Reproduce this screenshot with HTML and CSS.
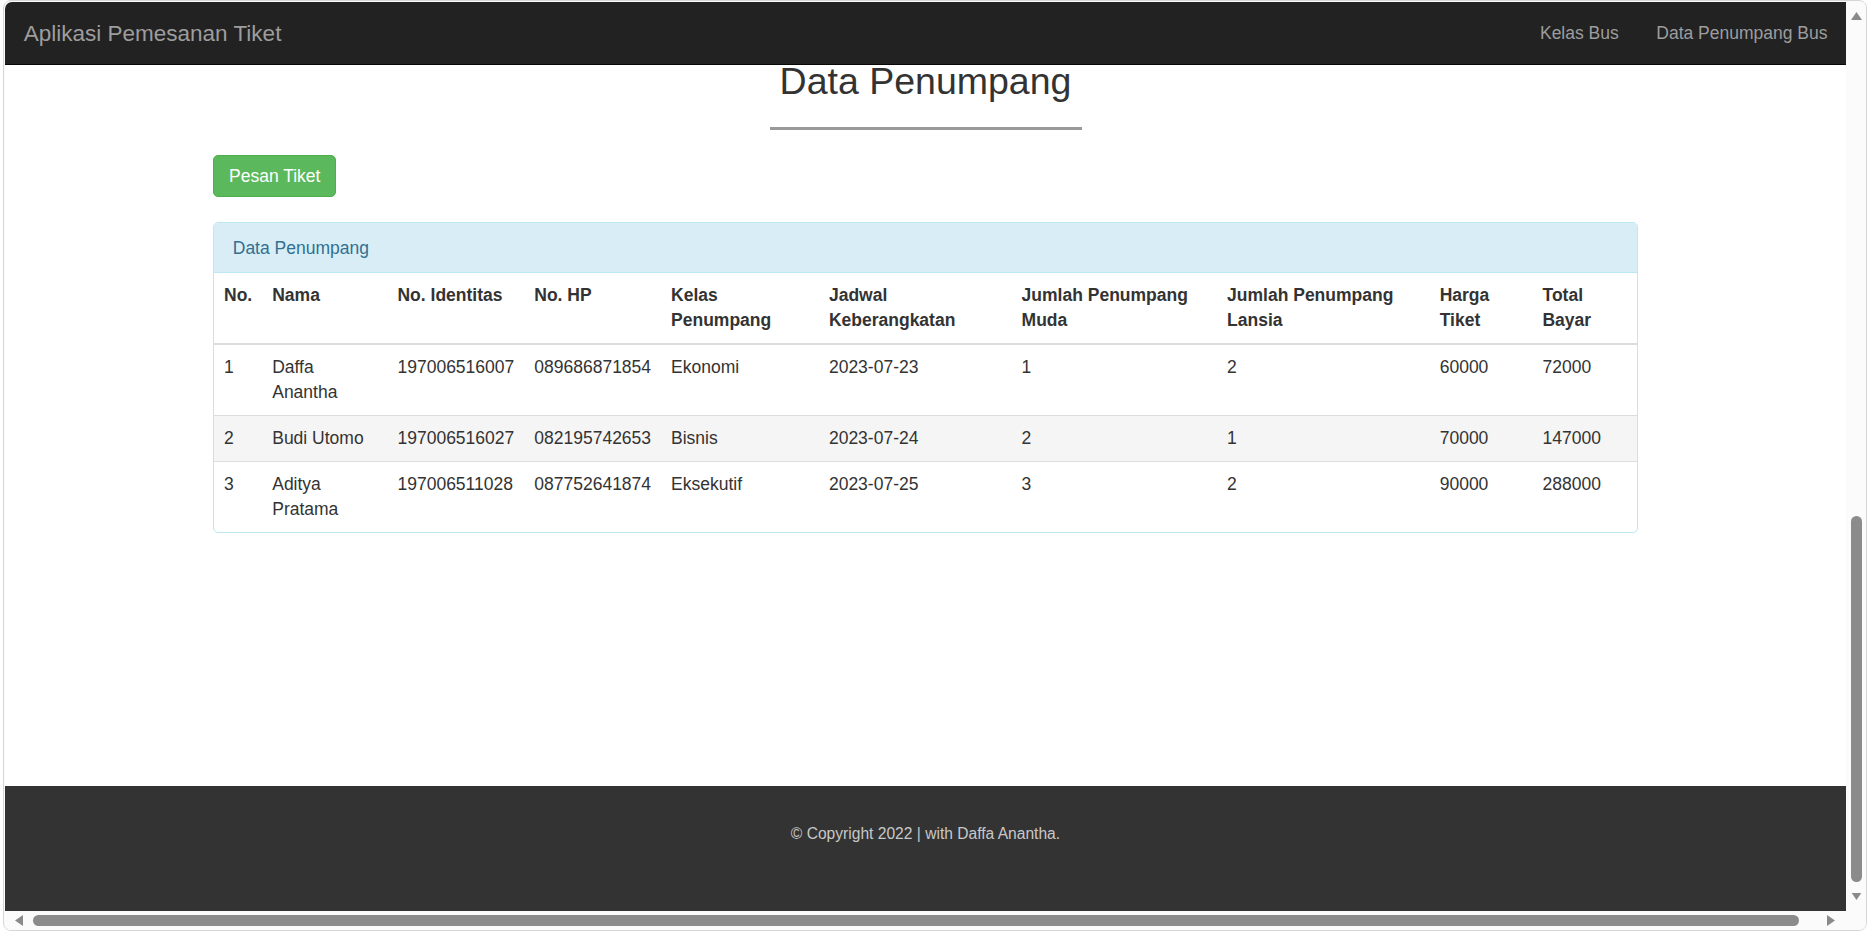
FILE: index.html
```html
<!DOCTYPE html>
<html lang="id">
<head>
<meta charset="utf-8">
<title>Aplikasi Pemesanan Tiket</title>
<link rel="stylesheet" href="styles.css">
</head>
<body>
<div class="window">
  <div class="viewport">
    <nav class="navbar">
      <a class="brand" href="#">Aplikasi Pemesanan Tiket</a>
      <ul class="nav">
        <li><a href="#">Kelas Bus</a></li>
        <li><a href="#">Data Penumpang Bus</a></li>
      </ul>
    </nav>
    <main class="main">
      <div class="container">
        <h2 class="title">Data Penumpang</h2>
        <hr class="title-rule">
        <a class="btn-success" href="#">Pesan Tiket</a>
        <div class="panel">
          <div class="panel-heading">Data Penumpang</div>
          <table class="table">
            <thead>
              <tr>
                <th>No.</th>
                <th>Nama</th>
                <th>No. Identitas</th>
                <th>No. HP</th>
                <th>Kelas Penumpang</th>
                <th>Jadwal Keberangkatan</th>
                <th>Jumlah Penumpang Muda</th>
                <th>Jumlah Penumpang Lansia</th>
                <th>Harga Tiket</th>
                <th>Total Bayar</th>
              </tr>
            </thead>
            <tbody>
              <tr>
                <td>1</td>
                <td>Daffa Anantha</td>
                <td>197006516007</td>
                <td>089686871854</td>
                <td>Ekonomi</td>
                <td>2023-07-23</td>
                <td>1</td>
                <td>2</td>
                <td>60000</td>
                <td>72000</td>
              </tr>
              <tr class="hover">
                <td>2</td>
                <td>Budi Utomo</td>
                <td>197006516027</td>
                <td>082195742653</td>
                <td>Bisnis</td>
                <td>2023-07-24</td>
                <td>2</td>
                <td>1</td>
                <td>70000</td>
                <td>147000</td>
              </tr>
              <tr>
                <td>3</td>
                <td>Aditya Pratama</td>
                <td>197006511028</td>
                <td>087752641874</td>
                <td>Eksekutif</td>
                <td>2023-07-25</td>
                <td>3</td>
                <td>2</td>
                <td>90000</td>
                <td>288000</td>
              </tr>
            </tbody>
          </table>
        </div>
      </div>
    </main>
    <footer class="footer">
      <p>© Copyright 2022 | with Daffa Anantha.</p>
    </footer>
  </div>
  <div class="vscroll">
    <svg class="arrow" width="11" height="8" viewBox="0 0 11 8"><polygon points="5.5,0 11,8 0,8" fill="#8a8a8a"/></svg>
    <div class="spacer"></div>
    <div class="vthumb"></div>
    <svg class="arrow down" width="11" height="8" viewBox="0 0 11 8"><polygon points="0,0 11,0 5.5,8" fill="#8a8a8a"/></svg>
  </div>
  <div class="hscroll">
    <svg class="arrow" width="8" height="11" viewBox="0 0 8 11"><polygon points="8,0 8,11 0,5.5" fill="#8a8a8a"/></svg>
    <div class="hthumb"></div>
    <div class="spacer"></div>
    <svg class="arrow" width="8" height="11" viewBox="0 0 8 11"><polygon points="0,0 8,5.5 0,11" fill="#8a8a8a"/></svg>
  </div>
  <div class="corner"></div>
</div>
</body>
</html>
```

FILE: styles.css
```css
* { box-sizing: border-box; }

html, body {
  margin: 0;
  padding: 0;
  background: #ffffff;
}

body {
  font-family: "Liberation Sans", Arial, Helvetica, sans-serif;
  font-size: 17.5px;
  line-height: 25px;
  color: #333333;
  width: 1867px;
  height: 932px;
  overflow: hidden;
}

.window {
  margin-left: 3px;
  width: 1864px;
  height: 931px;
  border: 1px solid #d6d6d6;
  border-radius: 8px;
  padding: 1px 0 0 1px;
  overflow: hidden;
  display: grid;
  grid-template-columns: 1841px 20px;
  grid-template-rows: 909px 19px;
  background: #fbfbfb;
}

.viewport {
  grid-column: 1;
  grid-row: 1;
  display: flex;
  flex-direction: column;
  background: #ffffff;
  overflow: hidden;
}

/* navbar */
.navbar {
  flex: none;
  height: 63px;
  background: #222222;
  border-bottom: 1px solid #080808;
  border-top-left-radius: 7px;
  display: flex;
  justify-content: space-between;
  align-items: stretch;
  padding: 0 0 0 18.75px;
}

.brand {
  display: block;
  font-size: 22.5px;
  line-height: 25px;
  padding: 18.5px 0;
  color: #9d9d9d;
  text-decoration: none;
}

.nav {
  list-style: none;
  margin: 0;
  padding: 0;
  display: flex;
}

.nav a {
  display: block;
  padding: 18.5px 18.75px;
  line-height: 25px;
  color: #9d9d9d;
  text-decoration: none;
}

.nav li:last-child a {
  padding-right: 18.5px;
}

/* main */
.main {
  flex: 1;
}

.container {
  width: 1425px;
  margin: 0 auto;
}

.title {
  margin: -2px 0 0;
  font-size: 37.5px;
  line-height: 37.5px;
  font-weight: normal;
  text-align: center;
  color: #333333;
}

.title-rule {
  width: 312px;
  height: 3px;
  border: 0;
  margin: 26.5px auto 25px;
  background: #999999;
}

.btn-success {
  display: inline-block;
  vertical-align: top;
  height: 42px;
  padding: 7.5px 15px;
  line-height: 25px;
  font-size: 17.5px;
  color: #ffffff;
  background: #5cb85c;
  border: 1px solid #4cae4c;
  border-radius: 5px;
  text-decoration: none;
}

.panel {
  margin-top: 25px;
  border: 1px solid #bce8f1;
  border-radius: 5px;
  overflow: hidden;
  background: #ffffff;
}

.panel-heading {
  background: #d9edf7;
  color: #31708f;
  padding: 12.5px 18.75px 11.5px;
  line-height: 25px;
  border-bottom: 1px solid #bce8f1;
}

.table {
  width: 100%;
  border-collapse: collapse;
  border-spacing: 0;
}

.table th,
.table td {
  padding: 10px;
  line-height: 25px;
  text-align: left;
  vertical-align: top;
}

.table th {
  font-weight: bold;
  border-bottom: 2.5px solid #dddddd;
}

.table tbody td {
  border-top: 1.25px solid #dddddd;
}

.table tbody tr:first-child td {
  border-top: 0;
}

.table tbody tr.hover {
  background: #f5f5f5;
}

/* footer */
.footer {
  flex: none;
  height: 125px;
  background: #333333;
  padding-top: 37px;
}

.footer p {
  margin: 0;
  text-align: center;
  font-size: 15.6px;
  line-height: 22px;
  color: #c8c8c8;
}

/* scrollbars */
.vscroll {
  grid-column: 2;
  grid-row: 1;
  display: flex;
  flex-direction: column;
  align-items: center;
  padding: 10px 0 11px;
  background: #fbfbfb;
}

.vscroll .spacer { flex: 1; }

.vthumb {
  width: 11px;
  height: 366px;
  border-radius: 6px;
  background: #8b8b8b;
  margin-bottom: 11px;
}

.vscroll .arrow.down { height: 7px; }

.arrow { display: block; flex: none; }

.hscroll {
  grid-column: 1;
  grid-row: 2;
  display: flex;
  align-items: center;
  padding: 0 11px 0 10px;
  background: #fbfbfb;
}

.hscroll .spacer { flex: 1; }

.hthumb {
  width: 1766px;
  height: 11px;
  margin-left: 10px;
  border-radius: 6px;
  background: #8b8b8b;
}

.corner {
  grid-column: 2;
  grid-row: 2;
  background: #fbfbfb;
}
```
